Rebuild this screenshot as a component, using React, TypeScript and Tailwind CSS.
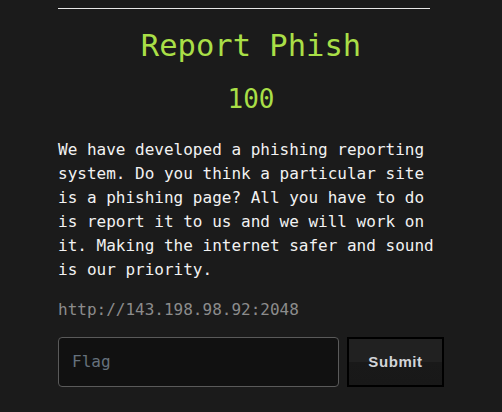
import React from "react";

export default function App() {
  const mono = { fontFamily: '"DejaVu Sans Mono", monospace' };
  return (
    <div className="w-[502px] h-[412px] bg-[#1b1b1b] overflow-hidden" style={mono}>
      <div className="w-[386px] ml-[58px] pt-[8px]">
        <div className="w-[372px] h-px bg-[#e8e8e8]" />
        <h1 className="mt-[19px] text-center text-[30.5px] leading-[36px] text-[#a9df47] font-normal">
          Report Phish
        </h1>
        <h2 className="mt-[19px] text-center text-[26px] leading-[32px] text-[#a9df47] font-normal">
          100
        </h2>
        <p className="mt-[23px] text-[16px] leading-[24px] text-[#f2f2f2]">
          We have developed a phishing reporting system. Do you think a particular site is a phishing
          page? All you have to do is report it to us and we will work on it. Making the internet safer
          and sound is our priority.
        </p>
        <p className="mt-[16px] text-[16px] leading-[24px] text-[#8c8c8c]">http://143.198.98.92:2048</p>
        <div className="mt-[15px] flex gap-[8px]">
          <div className="w-[281px] h-[50px] rounded-[4px] border border-[#5a5a5a] bg-[#111111] flex items-center pl-[13px]">
            <span className="text-[16px] text-[#66717d]">Flag</span>
          </div>
          <div
            className="w-[97px] h-[50px] border-2 border-black bg-[linear-gradient(#212121_0%,#212121_50%,#191919_50%,#181818_100%)] flex items-center justify-center"
          >
            <span
              className="text-[15px] font-bold tracking-[0.6px] text-[#d2d4d8]"
              style={{ fontFamily: '"Liberation Sans", Arial, sans-serif' }}
            >
              Submit
            </span>
          </div>
        </div>
      </div>
    </div>
  );
}
